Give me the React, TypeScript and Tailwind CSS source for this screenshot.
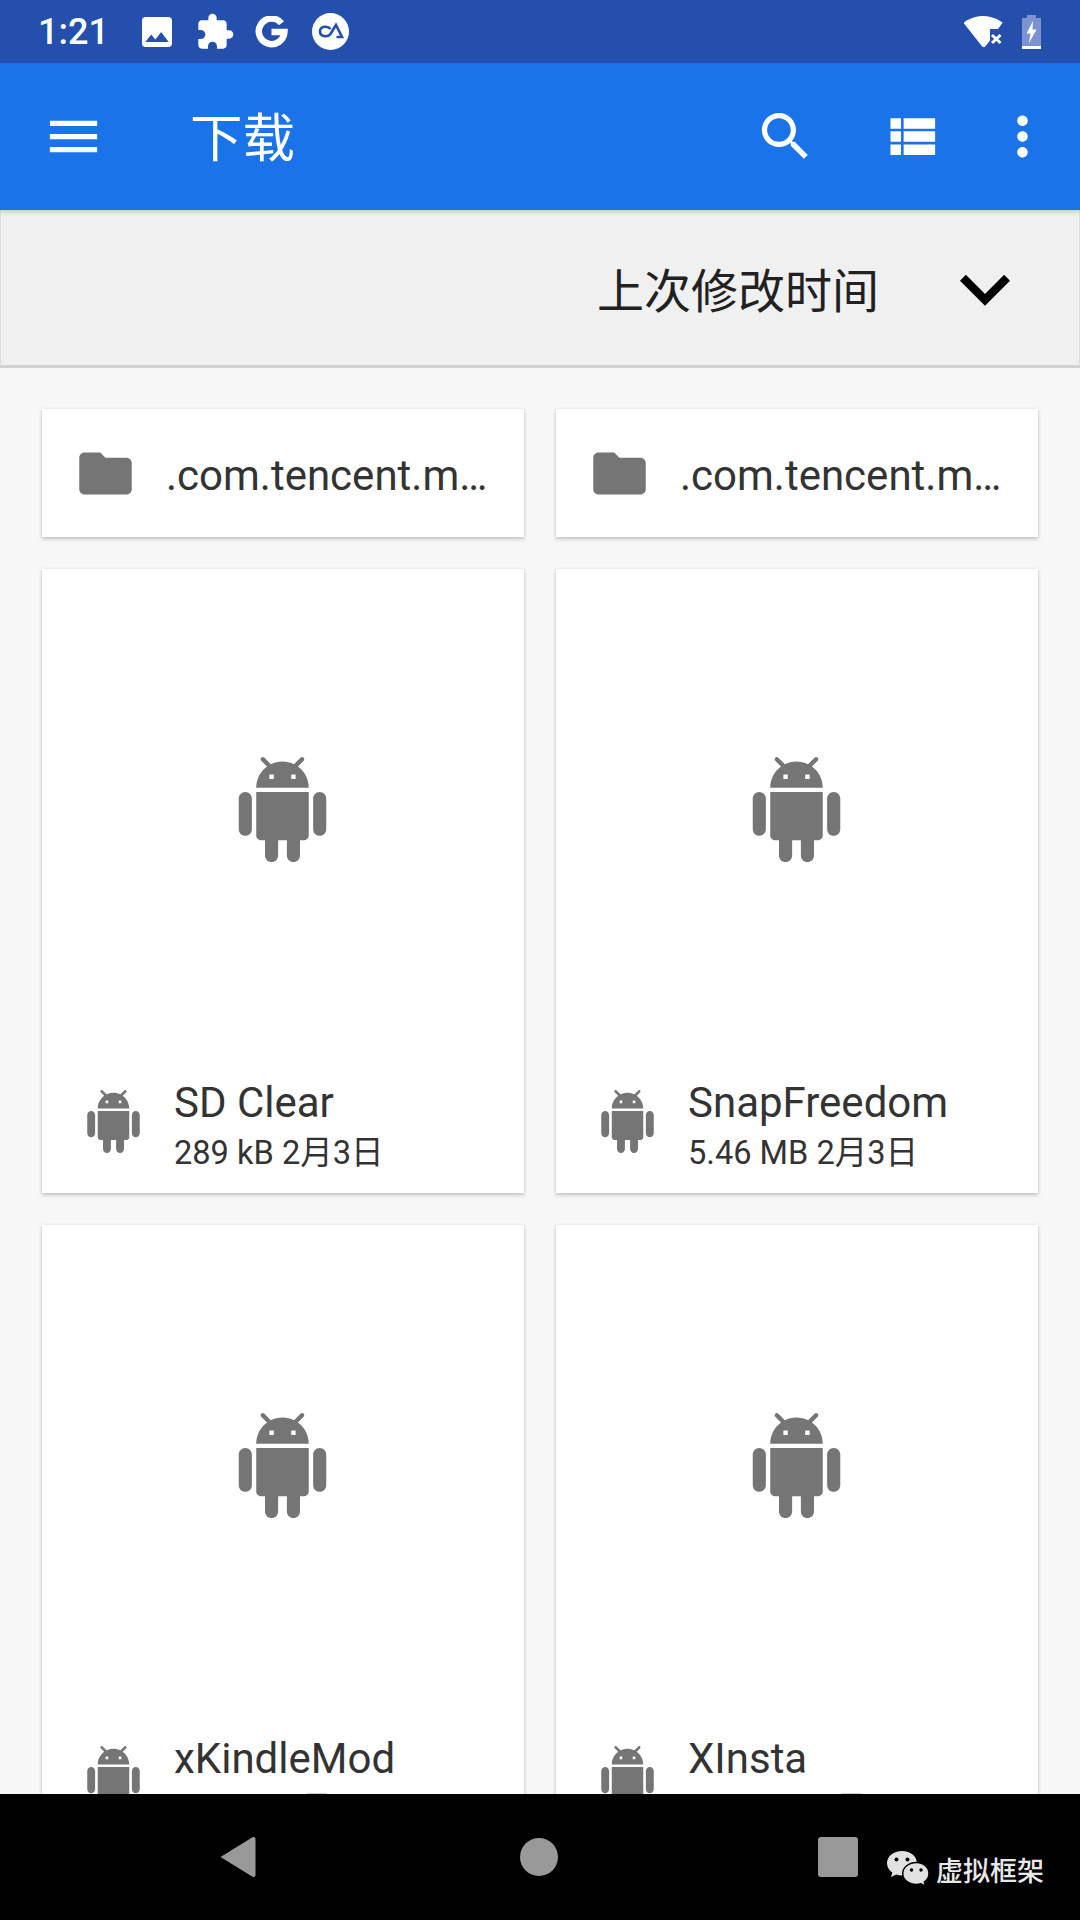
const ANDROID =
  "M6 18c0 .55.45 1 1 1h1v3.5c0 .83.67 1.5 1.5 1.5s1.5-.67 1.5-1.5V19h2v3.5c0 .83.67 1.5 1.5 1.5s1.5-.67 1.5-1.5V19h1c.55 0 1-.45 1-1V8H6v10zM3.5 8C2.67 8 2 8.67 2 9.5v7c0 .83.67 1.5 1.5 1.5S5 17.33 5 16.5v-7C5 8.67 4.33 8 3.5 8zm17 0c-.83 0-1.5.67-1.5 1.5v7c0 .83.67 1.5 1.5 1.5s1.5-.67 1.5-1.5v-7c0-.83-.67-1.5-1.5-1.5zm-4.97-5.84l1.3-1.3c.2-.2.2-.51 0-.71-.2-.2-.51-.2-.71 0l-1.48 1.48C13.85 1.23 12.95 1 12 1c-.96 0-1.86.23-2.66.63L7.85.15c-.2-.2-.51-.2-.71 0-.2.2-.2.51 0 .71l1.31 1.31C6.97 3.26 6 5.01 6 7h12c0-1.99-.97-3.75-2.47-4.84zM10 5H9V4h1v1zm5 0h-1V4h1v1z";

function Icon({ d, className }: { d: string; className: string }) {
  return (
    <svg viewBox="0 0 24 24" fill="currentColor" className={className} aria-hidden="true">
      <path d={d} />
    </svg>
  );
}

function StatusBar() {
  return (
    <div className="relative h-[63px] shrink-0 bg-[#244fad] text-white flex items-center">
      <span className="ml-[38px] w-[97px] text-[36px] font-medium leading-none pt-[1px]">1:21</span>
      {/* notification icons */}
      <Icon
        className="w-[40px] h-[40px] ml-[2px]"
        d="M21 19V5c0-1.1-.9-2-2-2H5c-1.1 0-2 .9-2 2v14c0 1.1.9 2 2 2h14c1.1 0 2-.9 2-2zM8.5 13.5l2.5 3.01L14.5 12l4.5 6H5l3.5-4.5z"
      />
      <Icon
        className="w-[40px] h-[40px] ml-[18px]"
        d="M20.5 11H19V7c0-1.1-.9-2-2-2h-4V3.5C13 2.12 11.88 1 10.5 1S8 2.12 8 3.5V5H4c-1.1 0-1.99.9-1.99 2v3.8H3.5c1.49 0 2.7 1.21 2.7 2.7s-1.21 2.7-2.7 2.7H2V20c0 1.1.9 2 2 2h3.8v-1.5c0-1.49 1.21-2.7 2.7-2.7 1.49 0 2.7 1.21 2.7 2.7V22H17c1.1 0 2-.9 2-2v-4h1.5c1.38 0 2.5-1.12 2.5-2.5S21.88 11 20.5 11z"
      />
      <svg viewBox="0 0 33 32" className="w-[33px] h-[32px] ml-[20px]" fill="none" stroke="white" strokeWidth="6.5" aria-hidden="true">
        <path d="M26.5 7.2A12.8 12.8 0 1 0 29.4 16H16.5" />
      </svg>
      <svg viewBox="0 0 37 37" className="w-[37px] h-[37px] ml-[24px]" aria-hidden="true">
        <circle cx="18.5" cy="18.5" r="18.5" fill="white" />
        <path
          d="M18.5 16C16 12.5 8 12.8 8 18.5C8 24 16 24.5 18.5 21L24 12L30 24H24.5"
          fill="none"
          stroke="#244fad"
          strokeWidth="2.6"
        />
      </svg>
      <div className="ml-auto mr-[39px] flex items-center gap-[19px]">
        <svg viewBox="0 0 40 31" className="w-[40px] h-[31px]" aria-hidden="true">
          <path
            d="M1 6.5C1 6.2 9 0 20 0S39 6 39.6 6.8L35 13H27V24.5L22.5 30.2C21.5 31.4 20 31.4 19 30.2L1 7.5Z"
            fill="white"
          />
          <path d="M29 19L37.5 27M37.5 19L29 27" stroke="white" strokeWidth="3" />
        </svg>
        <svg viewBox="0 0 19 34" className="w-[19px] h-[34px]" aria-hidden="true">
          <path d="M5 0H14V3H19V31H0V3H5Z" fill="#7c93cf" />
          <rect x="0" y="31" width="19" height="3" fill="white" />
          <path d="M11 6L4.5 18.5H8.5L7 28L14.5 14.5H10.5Z" fill="white" />
        </svg>
      </div>
    </div>
  );
}

function AppBar() {
  return (
    <div className="relative z-10 h-[147px] shrink-0 bg-[#1a73e8] text-white flex items-center shadow-[0_2px_5px_rgba(0,0,0,0.18)]">
      <Icon className="w-[63px] h-[63px] ml-[42px]" d="M3 18h18v-2H3v2zm0-5h18v-2H3v2zm0-7v2h18V6H3z" />
      <span className="ml-[85px] mt-[5px] text-[52.5px] leading-none">下载</span>
      <div className="ml-auto mr-[10px] flex items-center">
        <div className="w-[126px] flex justify-center">
          <Icon
            className="w-[63px] h-[63px]"
            d="M15.5 14h-.79l-.28-.27C15.41 12.59 16 11.11 16 9.5 16 5.91 13.09 3 9.5 3S3 5.91 3 9.5 5.91 16 9.5 16c1.61 0 3.09-.59 4.23-1.57l.27.28v.79l5 4.99L20.49 19l-4.99-5zm-6 0C7.01 14 5 11.99 5 9.5S7.01 5 9.5 5 14 7.01 14 9.5 11.99 14 9.5 14z"
          />
        </div>
        <div className="w-[126px] flex justify-center">
          <Icon
            className="w-[63px] h-[63px]"
            d="M4 14h4v-4H4v4zm0 5h4v-4H4v4zM4 9h4V5H4v4zm5 5h12v-4H9v4zm0 5h12v-4H9v4zM9 5v4h12V5H9z"
          />
        </div>
        <div className="w-[96px] flex justify-center">
          <Icon
            className="w-[63px] h-[63px]"
            d="M12 8c1.1 0 2-.9 2-2s-.9-2-2-2-2 .9-2 2 .9 2 2 2zm0 2c-1.1 0-2 .9-2 2s.9 2 2 2 2-.9 2-2-.9-2-2-2zm0 6c-1.1 0-2 .9-2 2s.9 2 2 2 2-.9 2-2-.9-2-2-2z"
          />
        </div>
      </div>
    </div>
  );
}

function SortBar() {
  return (
    <div className="h-[158px] shrink-0 bg-[#f0f0f0] border-x border-x-[#dedede] border-b-[3px] border-b-[#d2d2d2] flex items-center justify-end pr-[44px]">
      <span className="mt-[8px] text-[47px] leading-none text-[#212121]">上次修改时间</span>
      <Icon className="w-[100px] h-[100px] ml-[56px] mt-[2px] text-black" d="M16.59 8.59L12 13.17 7.41 8.59 6 10l6 6 6-6z" />
    </div>
  );
}

function FolderCard({ name }: { name: string }) {
  return (
    <div className="h-[128px] bg-white shadow-[0_2px_4px_rgba(0,0,0,0.2),0_0_3px_rgba(0,0,0,0.08)] flex items-center pl-[32px]">
      <Icon
        className="w-[63px] h-[63px] text-[#757575]"
        d="M10 4H4c-1.1 0-1.99.9-1.99 2L2 18c0 1.1.9 2 2 2h16c1.1 0 2-.9 2-2V8c0-1.1-.9-2-2-2h-8l-2-2z"
      />
      <span className="ml-[29px] mt-[5px] text-[42px] leading-none text-[#333333]">{name}</span>
    </div>
  );
}

function ApkCard({ name, meta }: { name: string; meta: string }) {
  return (
    <div className="h-[624px] bg-white shadow-[0_2px_4px_rgba(0,0,0,0.2),0_0_3px_rgba(0,0,0,0.08)] flex flex-col">
      <div className="flex-1 flex items-center justify-center pr-[2px]">
        <Icon className="w-[105px] h-[105px] text-[#757575]" d={ANDROID} />
      </div>
      <div className="h-[143px] flex items-center pl-[40px]">
        <Icon className="w-[63px] h-[63px] text-[#757575]" d={ANDROID} />
        <div className="ml-[29px] pt-[11px] text-[#333333]">
          <div className="text-[42px] leading-[50px]">{name}</div>
          <div className="mt-[2px] text-[32.6px] leading-[46px]">{meta}</div>
        </div>
      </div>
    </div>
  );
}

function NavBar() {
  return (
    <div className="relative z-10 h-[126px] shrink-0 bg-black flex items-center">
      {/* back, home, recents */}
      <svg viewBox="0 0 36 42" className="w-[37px] h-[42px] ml-[219px]" aria-hidden="true">
        <path d="M1 21L33 1.2C34.5 .4 36 1.2 36 3V39C36 40.8 34.5 41.6 33 40.8Z" fill="#999999" />
      </svg>
      <div className="w-[38px] h-[38px] rounded-full bg-[#999999] ml-[264px]" />
      <div className="w-[40px] h-[40px] rounded-[3px] bg-[#999999] ml-[260px]" />
      {/* watermark sits on top of the nav bar */}
      <div className="absolute left-[887px] top-[57px] flex items-center">
        <svg viewBox="0 0 42 36" className="w-[42px] h-[36px]" aria-hidden="true">
          <path d="M15 0C6.7 0 0 5.4 0 12.2C0 16 2.1 19.3 5.4 21.5L4 26L9.3 23.4C11 24 13 24.4 15 24.4C23.3 24.4 30 19 30 12.2C30 5.4 23.3 0 15 0Z" fill="#e2e2e2" />
          <path d="M29.5 11.5C21.9 11.5 15.7 16.4 15.7 22.5C15.7 28.6 21.9 33.5 29.5 33.5C31 33.5 32.5 33.3 33.9 32.8L38.5 35.5L37.3 31.1C40.2 29 42 26 42 22.5C42 16.4 36.5 11.5 29.5 11.5Z" fill="#e2e2e2" stroke="black" strokeWidth="1.5" />
          <circle cx="9.5" cy="8.5" r="2" fill="black" />
          <circle cx="20.5" cy="8.5" r="2" fill="black" />
          <circle cx="24.5" cy="19" r="1.7" fill="black" />
          <circle cx="34" cy="19" r="1.7" fill="black" />
        </svg>
        <span className="ml-[7px] mt-[6px] text-[27px] leading-none font-medium text-[#e8e8e8]">虚拟框架</span>
      </div>
    </div>
  );
}

export default function App() {
  return (
    <div className="w-[1080px] h-[1920px] flex flex-col overflow-hidden bg-[#f7f7f7] font-['Roboto','Noto_Sans_CJK_SC',sans-serif]">
      <StatusBar />
      <AppBar />
      <SortBar />
      <div className="flex-1 min-h-0 overflow-hidden px-[42px] pt-[41px] grid grid-cols-2 gap-x-[32px] gap-y-[32px] content-start">
        <FolderCard name=".com.tencent.m…" />
        <FolderCard name=".com.tencent.m…" />
        <ApkCard name="SD Clear" meta="289 kB 2月3日" />
        <ApkCard name="SnapFreedom" meta="5.46 MB 2月3日" />
        <ApkCard name="xKindleMod" meta="312 kB 2月3日" />
        <ApkCard name="XInsta" meta="4.85 MB 2月3日" />
      </div>
      <NavBar />
    </div>
  );
}
